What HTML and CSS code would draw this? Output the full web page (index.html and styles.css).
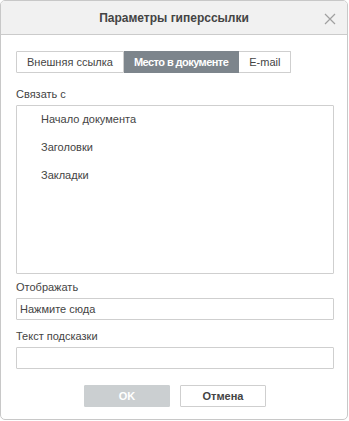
FILE: index.html
```html
<!DOCTYPE html>
<html>
<head>
<meta charset="utf-8">
<link rel="stylesheet" href="styles.css">
</head>
<body>
<div class="window">
  <div class="header">
    <div class="title">Параметры гиперссылки</div>
    <div class="close">
      <svg width="12" height="12" viewBox="0 0 12 12"><path d="M1 1 L11 11 M11 1 L1 11" stroke="#a0a0a0" stroke-width="1.2" fill="none"/></svg>
    </div>
  </div>
  <div class="body">
    <div class="tabs">
      <div class="tab">Внешняя ссылка</div>
      <div class="tab active">Место в документе</div>
      <div class="tab">E-mail</div>
    </div>
    <div class="label first">Связать с</div>
    <div class="list">
      <div class="item">Начало документа</div>
      <div class="item">Заголовки</div>
      <div class="item">Закладки</div>
    </div>
    <div class="label">Отображать</div>
    <div class="input">Нажмите сюда</div>
    <div class="label second">Текст подсказки</div>
    <div class="input"></div>
    <div class="buttons">
      <div class="btn ok">OK</div>
      <div class="btn cancel">Отмена</div>
    </div>
  </div>
</div>
</body>
</html>
```

FILE: styles.css
```css
html, body {
  margin: 0;
  padding: 0;
  background: #ffffff;
}
body {
  font-family: "Liberation Sans", Arial, sans-serif;
  font-size: 11px;
  color: #444444;
}
.window {
  box-sizing: border-box;
  width: 348px;
  height: 420px;
  border: 1px solid #c8c8c8;
  border-radius: 5px;
  overflow: hidden;
  background: #ffffff;
}
.header {
  height: 33px;
  border-bottom: 1px solid #cbcbcb;
  background: #f1f1f1;
  display: flex;
  align-items: center;
  justify-content: center;
  position: relative;
}
.title {
  font-size: 12px;
  font-weight: bold;
  color: #444444;
  padding-top: 1px;
}
.close {
  position: absolute;
  right: 11px;
  top: 12px;
  width: 12px;
  height: 12px;
  display: flex;
}
.body {
  padding: 16px 13px 0 15px;
  display: flex;
  flex-direction: column;
}
.tabs {
  display: flex;
  height: 22px;
}
.tab {
  box-sizing: border-box;
  height: 22px;
  line-height: 20px;
  border: 1px solid #cfcfcf;
  padding: 0 10px;
  color: #444444;
  white-space: nowrap;
}
.tab + .tab {
  border-left: none;
}
.tab:first-child {
  border-radius: 1px 0 0 1px;
}
.tab:last-child {
  border-radius: 0 1px 1px 0;
}
.tab.active {
  background: #7d858c;
  border-color: #7d858c;
  color: #ffffff;
  font-weight: bold;
  letter-spacing: -0.55px;
}
.label {
  height: 14px;
  line-height: 14px;
  margin-top: 6px;
  margin-bottom: 4px;
}
.label.first {
  margin-top: 14px;
}
.label.second {
  margin-top: 9px;
}
.list {
  box-sizing: border-box;
  height: 169px;
  border: 1px solid #cfcfcf;
  border-radius: 1px;
}
.item {
  height: 28px;
  line-height: 26px;
  padding-left: 24px;
}
.input {
  box-sizing: border-box;
  height: 22px;
  line-height: 20px;
  border: 1px solid #cfcfcf;
  border-radius: 1px;
  padding-left: 3px;
  color: #444444;
}
.buttons {
  display: flex;
  justify-content: center;
  gap: 10px;
  margin-top: 16px;
}
.btn {
  box-sizing: border-box;
  width: 86px;
  height: 22px;
  line-height: 20px;
  text-align: center;
  font-weight: bold;
  border: 1px solid #cfcfcf;
  border-radius: 1px;
}
.btn.ok {
  background: #cbcfd1;
  border-color: #cbcfd1;
  color: #ffffff;
}
.btn.cancel {
  background: #ffffff;
  color: #444444;
}
```
